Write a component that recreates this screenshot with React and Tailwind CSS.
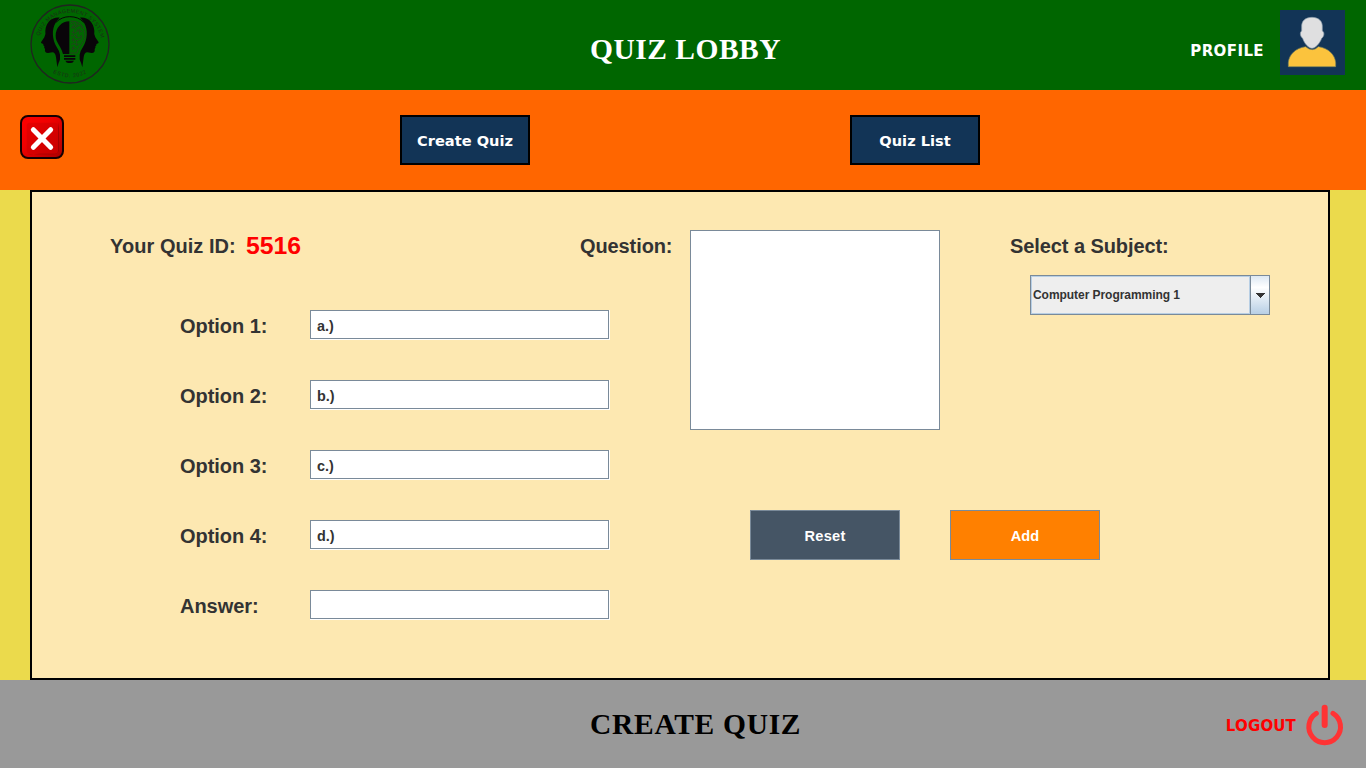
const sans = "font-['Liberation_Sans',sans-serif] font-bold";
const wide = "font-['DejaVu_Sans',sans-serif] font-bold";
const serif = "font-['Liberation_Serif',serif] font-bold";

function HeadProfile() {
  return (
    <path d="M119 53 C97 50 78 66 76 92 Q78 103 73 112 L63 127 Q62 131 70 132 Q68 136 73 139 Q71 143 75 147 Q73 159 84 159 L97 157 Q106 157 108 172 L112 202 L116 188 Q119 183 120 178 L120 164 Q118 152 110 141 C97 120 94 88 107 68 Q112 60 119 53 Z" />
  );
}

function Logo() {
  return (
    <svg width="100" height="90" viewBox="0 0 300 270">
      <defs>
        <path id="arcTop" d="M56 132 A94 94 0 0 1 244 132" />
        <path id="arcBottom" d="M50 132 A100 100 0 0 0 250 132" />
      </defs>
      <circle cx="150" cy="132" r="117" fill="none" stroke="#202420" strokeWidth="4" />
      <g fill="#090509">
        <HeadProfile />
        <g transform="translate(299 0) scale(-1 1)"><HeadProfile /></g>
        <path d="M148 64 A41 43 0 0 0 107 107 C107 128 121 133 129 162 H148 Z" />
        <path d="M132 166 h34 v5 h-34z M132 174 h34 v5 h-34z M136 182 h26 q-3 7 -9 7 h-8 q-6 0 -9 -7z" />
      </g>
      <path d="M108 67 Q125 50 149 50 Q176 50 191 67" fill="none" stroke="#090509" strokeWidth="3" />
      <g fill="none" stroke="#263c21" strokeWidth="2.5">
        <path d="M151 64 C177 60 195 82 195 105 C195 128 178 133 171 159 H151" />
        <path d="M152 72 q10 -8 12 3 t13 1 q10 0 7 9 M153 84 q12 -7 13 3 q4 8 13 1 M154 96 q12 8 18 -2 q8 -6 15 2 M153 108 q9 -8 14 2 q7 8 17 -3 M154 121 q12 -7 14 3 q8 -5 15 -7 M154 134 q9 -8 14 0 q5 5 9 -4 M154 147 q9 -8 16 0" />
        <path d="M159 75 v11 M171 68 v12 M161 90 v11 M179 88 v14 M170 102 v12 M160 112 v14 M184 106 v10 M170 124 v12 M160 138 v14" />
      </g>
      <g fill="#1c2a18" fontFamily="Liberation Sans, sans-serif" fontSize="16">
        <text letterSpacing="1.2"><textPath href="#arcTop" startOffset="24">QUIZ MANAGEMENT SYSTEM</textPath></text>
        <text letterSpacing="2"><textPath href="#arcBottom" startOffset="103">ESTD. 2022</textPath></text>
      </g>
    </svg>
  );
}

function Avatar() {
  return (
    <svg width="65" height="65" viewBox="0 0 195 195">
      <rect width="195" height="195" fill="#123456" />
      <path d="M25 170 V158 C27 133 47 114 77 110 Q97 128 115 110 C145 114 165 134 167 158 V170 Z" fill="#fbc33d" stroke="#80855a" strokeWidth="2" />
      <path d="M96 22 C75 22 64 34 65 51 V63 C59 66 60 79 68 85 C73 101 86 115 96 115 C106 115 119 101 125 85 C133 79 134 66 127 63 V51 C128 34 116 22 96 22 Z" fill="#dfdfe0" stroke="#899baa" strokeWidth="2" />
    </svg>
  );
}

function CloseIcon() {
  return (
    <svg width="44" height="44" viewBox="0 0 132 132">
      <defs>
        <linearGradient id="redFace" x1="0" y1="0" x2="1" y2="1">
          <stop offset="0" stopColor="#ff0000" />
          <stop offset=".4" stopColor="#f00000" />
          <stop offset="1" stopColor="#a80000" />
        </linearGradient>
        <linearGradient id="redInner" x1="0" y1="0" x2="1" y2="1">
          <stop offset="0" stopColor="#e80000" />
          <stop offset="1" stopColor="#c80000" />
        </linearGradient>
      </defs>
      <rect x="3" y="3" width="126" height="126" rx="21" fill="url(#redFace)" stroke="#160000" strokeWidth="6" />
      <path d="M116 20 V108 Q112 118 100 118 H22 Q112 124 116 20" fill="#930000" />
      <rect x="20" y="23" width="94" height="93" rx="9" fill="url(#redInner)" />
      <path d="M40 44 L92 97 M92 44 L40 97" stroke="#fff" strokeWidth="15" strokeLinecap="round" />
    </svg>
  );
}

function PowerIcon() {
  return (
    <svg width="40" height="42" viewBox="0 0 120 126" fill="none" stroke="#ff3334" strokeLinecap="round">
      <path d="M34 28 A47.500 47.500 0 1 0 84 28" strokeWidth="15" />
      <path d="M59 11 V63" strokeWidth="18" />
    </svg>
  );
}

function NavButton({ children }) {
  return (
    <button className={`${wide} h-[50px] w-[130px] border-2 border-black bg-[#123456] pt-px text-[14.6px] whitespace-nowrap text-white`}>
      {children}
    </button>
  );
}

function OptionRow({ label, value }) {
  return (
    <div className="flex h-[30px] items-start">
      <label className="w-[130px] shrink-0 pt-px text-[20px] leading-[30px] -tracking-[0.05px]">{label}</label>
      <div className="h-[30px] w-[300px] shrink-0 border-r border-b border-white">
        <div className="h-[29px] border border-[#7a8a99] bg-white pl-[6px] text-[14.4px] leading-[30px]">{value}</div>
      </div>
    </div>
  );
}

const options = [
  ["Option 1:", "a.)"],
  ["Option 2:", "b.)"],
  ["Option 3:", "c.)"],
  ["Option 4:", "d.)"],
  ["Answer:", ""],
];

export default function App() {
  return (
    <div className="flex h-[768px] w-[1366px] flex-col overflow-hidden bg-[#ebda4c]">
      <header className="grid h-[90px] shrink-0 grid-cols-[590px_1fr_auto] bg-[#006600]">
        <div className="pl-5"><Logo /></div>
        <h1 className={`${serif} pt-[33px] text-[29.5px] leading-8 tracking-[0.5px] text-white`}>QUIZ LOBBY</h1>
        <div className="flex gap-4 pt-[10px] pr-[21px]">
          <span className={`${wide} pt-[31px] text-[15px] leading-5 tracking-[0.4px] text-white`}>PROFILE</span>
          <Avatar />
        </div>
      </header>

      <nav className="flex h-[100px] shrink-0 items-start bg-[#ff6600] pt-[25px] pl-5">
        <button className="mr-[336px]"><CloseIcon /></button>
        <NavButton>Create Quiz</NavButton>
        <div className="ml-[320px]"><NavButton>Quiz List</NavButton></div>
      </nav>

      <main className={`${sans} ml-[30px] grid h-[490px] w-[1300px] shrink-0 grid-cols-[548px_430px_1fr] border-2 border-black bg-[#fde8b1] pt-[38px] text-[#333333]`}>
        <section>
          <div className="flex h-[30px] pl-[78px] leading-8">
            <span className="w-[136px] text-[20px] tracking-[0.05px]">Your Quiz ID:</span>
            <span className="text-[24.8px] text-[#ff0000]">5516</span>
          </div>
          <div className="mt-[50px] ml-[148px] flex flex-col gap-10">
            {options.map(([label, value]) => (
              <OptionRow key={label} label={label} value={value} />
            ))}
          </div>
        </section>

        <section>
          <div className="flex">
            <label className="w-[110px] text-[20px] leading-8 -tracking-[0.1px]">Question:</label>
            <div className="h-[200px] w-[250px] border border-[#7a8a99] bg-white" />
          </div>
          <div className="mt-20 ml-[170px] flex gap-[50px] text-[14.6px] text-white">
            <button className="h-[50px] w-[150px] shrink-0 border border-[#7a8a99] bg-[#455565] pt-[3px] tracking-[0.3px]">Reset</button>
            <button className="h-[50px] w-[150px] shrink-0 border border-[#7a8a99] bg-[#ff8000] pt-[3px]">Add</button>
          </div>
        </section>

        <section>
          <label className="block text-[20px] leading-8 -tracking-[0.08px]">Select a Subject:</label>
          <div className="mt-[13px] ml-5 flex h-10 w-[240px] border border-[#7a8a99]">
            <div className="flex-1 border border-[#b8cfe5] bg-[#eeeeee] pl-px text-[12px] leading-[36px] -tracking-[0.05px]">Computer Programming 1</div>
            <div className="flex w-[19px] items-center justify-center border-l border-[#7a8a99] bg-linear-to-b from-[#dde8f3] via-white via-30% to-[#b8cfe5] pt-px">
              <svg width="10" height="5" viewBox="0 0 10 5" shapeRendering="crispEdges"><path d="M0 0h10L5 5z" fill="#333" /></svg>
            </div>
          </div>
        </section>
      </main>

      <footer className="grid h-[88px] shrink-0 grid-cols-[590px_1fr_auto] bg-[#999999]">
        <h2 className={`${serif} col-start-2 pt-[28px] text-[29.5px] leading-8 tracking-[0.7px] text-black`}>CREATE QUIZ</h2>
        <div className="flex gap-[9px] pt-6 pr-[21px]">
          <span className={`${wide} pt-[12px] text-[15px] leading-5 tracking-[0.15px] text-[#ff0000]`}>LOGOUT</span>
          <PowerIcon />
        </div>
      </footer>
    </div>
  );
}
